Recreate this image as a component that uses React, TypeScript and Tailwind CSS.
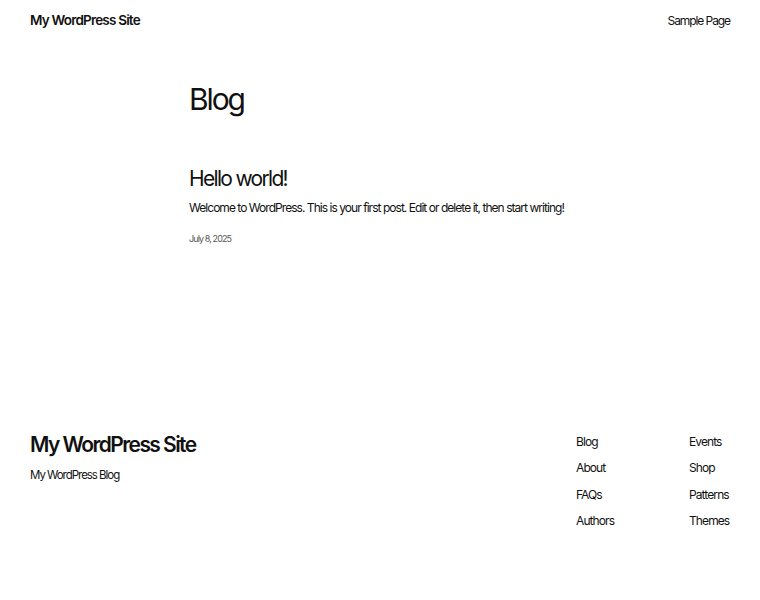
import React from "react";

export default function App() {
  const font = { fontFamily: "Inter, 'Noto Sans', sans-serif" };
  return (
    <div className="min-h-[600px] bg-white text-[#111]" style={font}>
      <header className="flex items-center justify-between px-[30px] h-[41px]">
        <div className="text-[13.5px] font-semibold tracking-[-0.06em]">My WordPress Site</div>
        <nav className="text-[12px] tracking-[-0.09em]">Sample Page</nav>
      </header>
      <main className="w-[382px] mx-auto pt-[38px] h-[390px]">
        <h1 className="text-[30px] leading-[40px] tracking-[-0.07em] font-normal">Blog</h1>
        <article className="mt-[46px]">
          <h2 className="text-[21px] leading-[28px] tracking-[-0.08em]">Hello world!</h2>
          <p className="mt-[6px] text-[12px] leading-[18px] tracking-[-0.08em]">
            Welcome to WordPress. This is your first post. Edit or delete it, then start writing!
          </p>
          <div className="mt-[16px] text-[9px] leading-[12px] text-[#555] tracking-[-0.1em]">July 8, 2025</div>
        </article>
      </main>
      <footer className="flex justify-between px-[30px]">
        <div>
          <div className="text-[21px] leading-[28px] font-semibold tracking-[-0.075em]">My WordPress Site</div>
          <div className="mt-[7px] text-[11.5px] leading-[18px] tracking-[-0.09em]">My WordPress Blog</div>
        </div>
        <div className="flex pt-[2px]">
          <ul className="w-[113px] flex flex-col gap-[8.3px] text-[12px] leading-[18px] tracking-[-0.075em]">
            <li>Blog</li>
            <li>About</li>
            <li>FAQs</li>
            <li>Authors</li>
          </ul>
          <ul className="w-[41px] flex flex-col gap-[8.3px] text-[12px] leading-[18px] tracking-[-0.075em]">
            <li>Events</li>
            <li>Shop</li>
            <li>Patterns</li>
            <li>Themes</li>
          </ul>
        </div>
      </footer>
    </div>
  );
}
